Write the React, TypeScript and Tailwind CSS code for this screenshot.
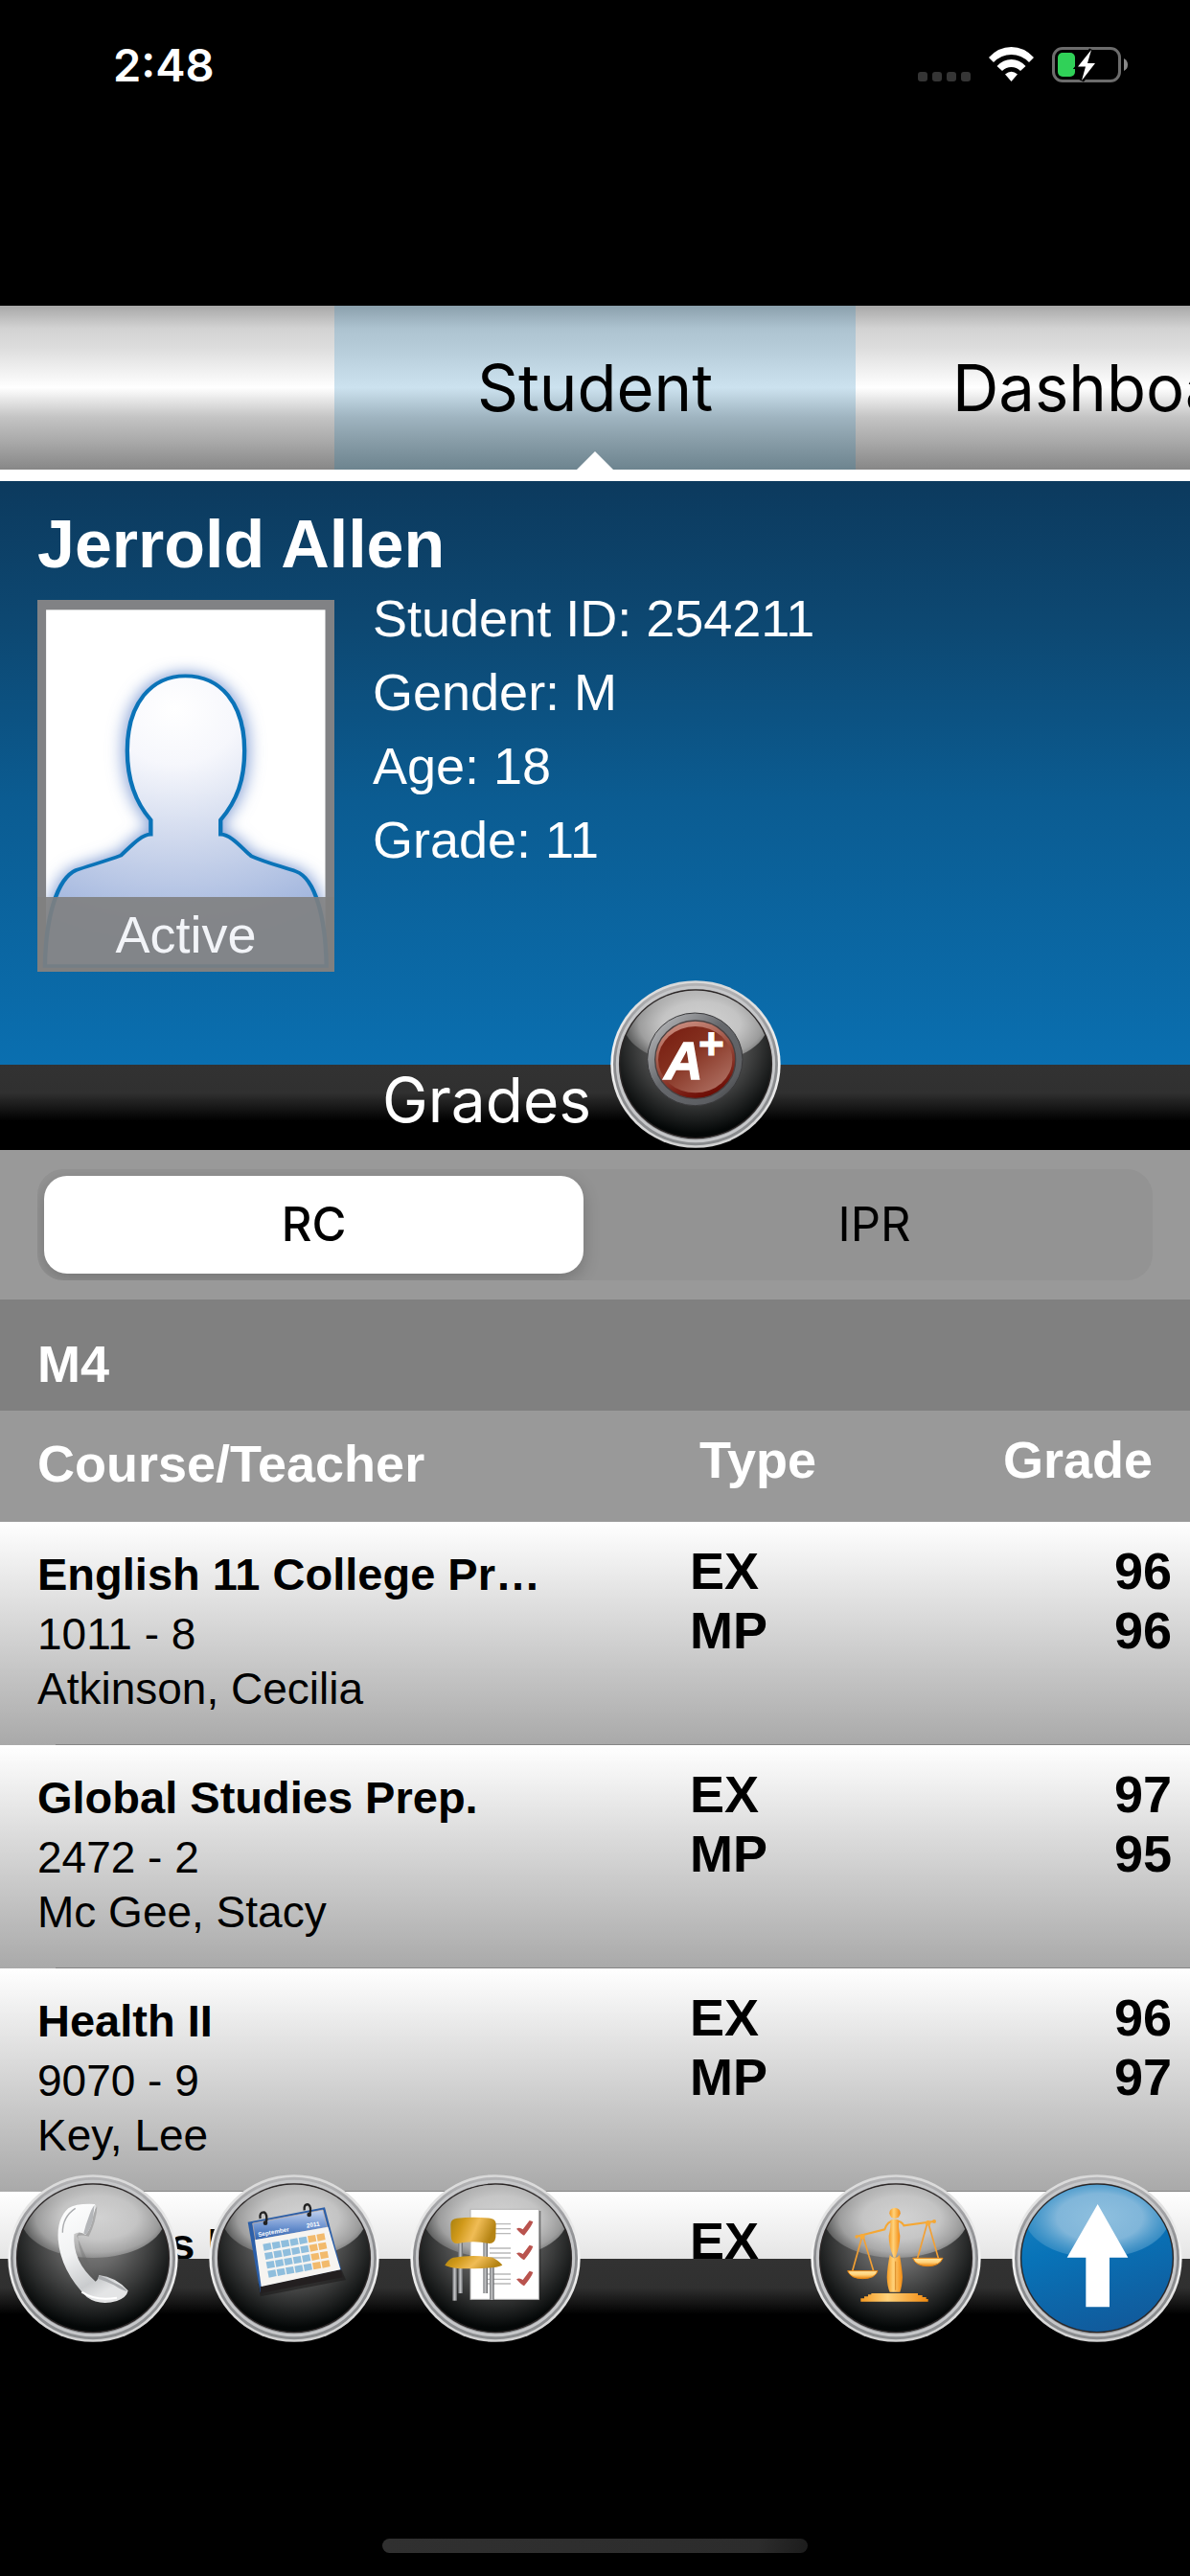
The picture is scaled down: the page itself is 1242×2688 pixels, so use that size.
import type { ReactNode } from "react";

type Course = {
  title: string;
  section: string;
  teacher: string;
  grades: { type: string; grade: string }[];
};

const courses: Course[] = [
  {
    title: "English 11 College Prep",
    section: "1011 - 8",
    teacher: "Atkinson, Cecilia",
    grades: [
      { type: "EX", grade: "96" },
      { type: "MP", grade: "96" },
    ],
  },
  {
    title: "Global Studies Prep.",
    section: "2472 - 2",
    teacher: "Mc Gee, Stacy",
    grades: [
      { type: "EX", grade: "97" },
      { type: "MP", grade: "95" },
    ],
  },
  {
    title: "Health II",
    section: "9070 - 9",
    teacher: "Key, Lee",
    grades: [
      { type: "EX", grade: "96" },
      { type: "MP", grade: "97" },
    ],
  },
  {
    title: "Honors Physics",
    section: "",
    teacher: "",
    grades: [{ type: "EX", grade: "" }],
  },
];

/* Glossy metal-rimmed disc that carries an icon. */
function Orb({ blue = false, children }: { blue?: boolean; children: ReactNode }) {
  const face = blue ? "url(#orb-blue)" : "url(#orb-dark)";
  return (
    <svg viewBox="0 0 534 525" className="block h-[175px] w-[178px]" aria-hidden="true">
      <defs>
        <linearGradient id="orb-rim" x1="0" y1="0" x2="0" y2="1">
          <stop offset="0" stopColor="#b4b4b6" />
          <stop offset="0.45" stopColor="#8b8c8f" />
          <stop offset="1" stopColor="#8a8c8e" />
        </linearGradient>
        <linearGradient id="orb-edge" x1="0" y1="0" x2="0" y2="1">
          <stop offset="0" stopColor="#d8d8d8" />
          <stop offset="0.5" stopColor="#f4f4f4" />
          <stop offset="1" stopColor="#d0d0d0" />
        </linearGradient>
        <radialGradient id="orb-dark" cx="0.5" cy="0.36" r="0.66">
          <stop offset="0" stopColor="#858585" />
          <stop offset="0.3" stopColor="#686868" />
          <stop offset="0.6" stopColor="#3a3b3b" />
          <stop offset="0.92" stopColor="#040707" />
        </radialGradient>
        <linearGradient id="orb-blue" x1="0.3" y1="0" x2="0.6" y2="1">
          <stop offset="0" stopColor="#1b83c2" />
          <stop offset="0.4" stopColor="#0873b8" />
          <stop offset="1" stopColor="#115a9b" />
        </linearGradient>
        <radialGradient id="orb-gloss" cx="0.54" cy="0.5" r="0.54">
          <stop offset="0" stopColor="#d2d2d2" />
          <stop offset="0.5" stopColor="#cacaca" stopOpacity="0.95" />
          <stop offset="0.8" stopColor="#bcbcbc" stopOpacity="0.75" />
          <stop offset="1" stopColor="#a8a8a8" stopOpacity="0.35" />
        </radialGradient>
        <linearGradient id="orb-sky" x1="0" y1="0" x2="0" y2="1">
          <stop offset="0" stopColor="#c4c4c4" stopOpacity="0.9" />
          <stop offset="0.35" stopColor="#c4c4c4" stopOpacity="0" />
        </linearGradient>
        <radialGradient id="orb-gloss-blue" cx="0.52" cy="0.5" r="0.54">
          <stop offset="0" stopColor="#8fc0df" />
          <stop offset="0.55" stopColor="#86b9db" stopOpacity="0.95" />
          <stop offset="1" stopColor="#4b9acb" stopOpacity="0.45" />
        </radialGradient>
        <clipPath id="orb-clip">
          <ellipse cx="267" cy="262" rx="236" ry="230" />
        </clipPath>
      </defs>
      <ellipse cx="267" cy="262.5" rx="266" ry="262" fill="url(#orb-edge)" />
      <ellipse cx="267" cy="262.5" rx="258" ry="254" fill="url(#orb-rim)" />
      <ellipse cx="267" cy="262.5" rx="245" ry="241" fill="none" stroke="#c6c7c9" strokeWidth="9" />
      <ellipse cx="267" cy="262" rx="238" ry="232" fill={face} stroke="#2b2626" strokeWidth="4" />
      <g clipPath="url(#orb-clip)">
        {!blue && <ellipse cx="267" cy="135" rx="226" ry="126" fill="url(#orb-sky)" />}
        <ellipse cx="267" cy="135" rx="226" ry="126" fill={blue ? "url(#orb-gloss-blue)" : "url(#orb-gloss)"} />
      </g>
      {children}
    </svg>
  );
}

function GradeIcon() {
  return (
    <g transform="translate(-771 -70)">
      <defs>
        <linearGradient id="badge-ring" x1="0" y1="0" x2="1" y2="1">
          <stop offset="0" stopColor="#c8c9cb" />
          <stop offset="0.45" stopColor="#66686c" />
          <stop offset="0.8" stopColor="#5c5e62" />
          <stop offset="1" stopColor="#333" />
        </linearGradient>
        <linearGradient id="badge-rim" x1="0.2" y1="0" x2="0.6" y2="1">
          <stop offset="0" stopColor="#cf9284" />
          <stop offset="0.5" stopColor="#9a4d3e" />
          <stop offset="1" stopColor="#6b0a02" />
        </linearGradient>
        <linearGradient id="badge-red" x1="0.1" y1="0.1" x2="0.8" y2="0.9">
          <stop offset="0" stopColor="#7a2013" />
          <stop offset="0.4" stopColor="#84301f" />
          <stop offset="1" stopColor="#a9685a" />
        </linearGradient>
      </defs>
      <ellipse cx="1036" cy="317" rx="149" ry="145" fill="url(#badge-ring)" stroke="#3a3a3c" strokeWidth="3" />
      <ellipse cx="1037" cy="318" rx="126" ry="122" fill="url(#badge-rim)" stroke="#4a4040" strokeWidth="4" />
      <ellipse cx="1037" cy="318" rx="116" ry="104" fill="url(#badge-red)" />
      <text x="940" y="380" fill="#fff" stroke="#fff" strokeWidth="4" fontFamily="Liberation Sans, sans-serif" fontWeight="700" fontStyle="italic" fontSize="168">
        A
      </text>
      <text x="1047" y="317" fill="#fff" stroke="#fff" strokeWidth="3" fontFamily="Liberation Sans, sans-serif" fontWeight="700" fontSize="138">
        +
      </text>
    </g>
  );
}

function PhoneIcon() {
  return (
    <g transform="translate(-24 -58)">
      <defs>
        <linearGradient id="phone" x1="0" y1="0" x2="0.4" y2="1">
          <stop offset="0" stopColor="#ffffff" />
          <stop offset="0.5" stopColor="#f1f2f3" />
          <stop offset="0.85" stopColor="#c9cbcd" />
          <stop offset="1" stopColor="#e4e5e6" />
        </linearGradient>
      </defs>
      <path d="M304 158Q302 204 278 252Q256 246 244 250Q246 320 300 386L240 250Z" fill="#666" opacity="0.35" />
      <path
        d="M214 164Q240 148 297 151Q302 158 292 186Q286 226 268 247Q250 233 232 245Q226 330 299 393Q306 390 310 373Q362 378 401 422Q396 444 366 454Q312 470 272 442Q190 360 182 262Q178 196 214 164Z"
        fill="url(#phone)"
      />
      <path d="M296 154Q288 160 276 196Q268 216 262 242Q268 250 274 240Q290 214 292 186Z" fill="#b4b6b9" />
      <path d="M310 374Q336 384 360 398Q386 408 399 424Q386 424 356 404Q332 392 307 384Z" fill="#aaacaf" />
      <path d="M196 240Q196 190 236 164" fill="none" stroke="#a9abae" strokeWidth="4" />
      <path d="M256 426Q300 456 366 444" fill="none" stroke="#fff" strokeWidth="6" />
    </g>
  );
}

function CalendarIcon() {
  const cells = [0, 1, 2, 3].flatMap((row) =>
    [0, 1, 2, 3, 4, 5, 6].map((col) => ({
      key: `${row}-${col}`,
      x: 820 + col * 28 + row * 5,
      y: 276 - col * 5 + row * 28,
      fill: col > 4 ? "#f2ba6c" : "#8fbedd",
    })),
  );
  return (
    <g transform="translate(-651 -58)">
      <defs>
        <linearGradient id="cal-head" x1="0" y1="0" x2="0" y2="1">
          <stop offset="0" stopColor="#c3d2ee" />
          <stop offset="0.55" stopColor="#6d93d0" />
          <stop offset="1" stopColor="#2f62ad" />
        </linearGradient>
      </defs>
      <path d="M812 440L1080 388L1062 345L805 400Z" fill="#1c1a1b" opacity="0.6" />
      <path d="M773 207L1014 161L1066 358L812 428Z" fill="#2c5fa8" />
      <path d="M812 408L1064 355L1070 380L812 430Z" fill="#231f20" />
      <path d="M788 211L1008 169L1022 224L797 264Z" fill="url(#cal-head)" stroke="#d9b9a0" strokeWidth="2" />
      <path d="M795 263L1024 222L1063 356L815 409Z" fill="#f6f4f1" />
      {cells.map((c) => (
        <path key={c.key} d={`M${c.x} ${c.y}l24 -4l4 20l-24 5z`} fill={c.fill} />
      ))}
      <g fill="#fff" fontFamily="Liberation Sans, sans-serif" fontWeight="700" fontSize="19">
        <text transform="translate(806 253) rotate(-10)">September</text>
        <text transform="translate(958 225) rotate(-10)">2011</text>
      </g>
      <path d="M812 196Q808 176 824 176Q836 182 830 212M950 170Q948 150 962 152Q974 158 966 187" fill="none" stroke="#222" strokeWidth="7" />
      <circle cx="828" cy="210" r="7" fill="#222" />
      <circle cx="965" cy="184" r="7" fill="#222" />
    </g>
  );
}

function ChecklistIcon() {
  return (
    <g transform="translate(-81 -58)">
      <defs>
        <linearGradient id="seat" x1="0" y1="0" x2="1" y2="0.25">
          <stop offset="0" stopColor="#a8800f" />
          <stop offset="0.3" stopColor="#d0991a" />
          <stop offset="0.62" stopColor="#f0bc55" />
          <stop offset="1" stopColor="#b58414" />
        </linearGradient>
        <linearGradient id="leg" x1="0" y1="0" x2="1" y2="0">
          <stop offset="0" stopColor="#77797c" />
          <stop offset="0.5" stopColor="#c4c5c7" />
          <stop offset="1" stopColor="#5c5e61" />
        </linearGradient>
      </defs>
      <rect x="276" y="172" width="214" height="282" fill="#222" opacity="0.5" />
      <rect x="270" y="167" width="214" height="282" fill="#fff" stroke="#b4b4b4" strokeWidth="3" />
      <path d="M340 213h56M340 228h56M340 243h56M330 289h66M330 304h66M330 319h66M322 370h74M322 386h74M322 400h74" stroke="#b9b9b9" strokeWidth="4" />
      {[0, 77, 158].map((dy) => (
        <path
          key={dy}
          transform={`translate(0 ${dy})`}
          d="M414 228Q424 222 434 230L455 202L466 206Q462 220 438 249Q428 244 414 228Z"
          fill="#b9534e"
        />
      ))}
      <g fill="url(#leg)">
        <rect x="232" y="268" width="14" height="162" />
        <rect x="310" y="268" width="14" height="162" />
        <rect x="214" y="345" width="14" height="108" />
        <rect x="330" y="345" width="14" height="106" />
      </g>
      <path d="M208 214Q208 198 228 195Q280 190 332 195Q350 198 350 214L349 255Q346 274 328 274Q280 264 230 274Q210 274 209 252Z" fill="url(#seat)" />
      <path d="M216 318Q280 308 340 318Q362 330 370 342Q350 352 280 353Q210 354 190 342Q202 322 216 318Z" fill="url(#seat)" />
    </g>
  );
}

function ScalesIcon() {
  return (
    <g transform="translate(-78 -58)">
      <defs>
        <linearGradient id="gold" x1="0" y1="0" x2="1" y2="0">
          <stop offset="0" stopColor="#f59a22" />
          <stop offset="0.4" stopColor="#ffd27a" />
          <stop offset="1" stopColor="#f28a10" />
        </linearGradient>
        <linearGradient id="pan" x1="0" y1="0" x2="0" y2="1">
          <stop offset="0" stopColor="#ffe9a8" />
          <stop offset="0.5" stopColor="#ffd27a" />
          <stop offset="1" stopColor="#e98712" />
        </linearGradient>
      </defs>
      <path d="M222 252L310 230Q318 204 341 202Q364 204 370 218L464 205" fill="none" stroke="#f5a733" strokeWidth="6" />
      <circle cx="222" cy="253" r="5" fill="#f5a733" />
      <circle cx="465" cy="205" r="6" fill="#f5a733" />
      <path d="M240 250L209 360M242 250L275 360M444 208L413 320M446 208L478 320" stroke="#f2a034" strokeWidth="5" />
      <circle cx="240" cy="252" r="8" fill="#f7ab39" />
      <circle cx="446" cy="210" r="8" fill="#f7ab39" />
      <path d="M194 360H288Q280 384 241 384Q204 384 194 360Z" fill="url(#pan)" stroke="#e98712" strokeWidth="3" />
      <path d="M398 320H492Q482 345 445 345Q408 345 398 320Z" fill="url(#pan)" stroke="#e98712" strokeWidth="3" />
      <circle cx="342" cy="179" r="17" fill="url(#gold)" />
      <path d="M328 202Q341 194 355 202Q352 220 358 250Q358 280 344 318H338Q322 280 323 250Q330 220 328 202Z" fill="url(#gold)" />
      <path d="M326 310Q341 330 357 310Q364 350 366 380Q364 410 358 426H326Q318 410 317 380Q318 350 326 310Z" fill="url(#gold)" />
      <path d="M344 330V420" stroke="#c77411" strokeWidth="2" />
      <path d="M268 430H414V436H428V442H440V448H446V456H235V446H246V440H258V434H268Z" fill="url(#gold)" />
    </g>
  );
}

function ArrowIcon() {
  return (
    <g transform="translate(-709 -58)">
      <path d="M978 151L1073 318H1015V473H941V318H882Z" fill="#fff" />
    </g>
  );
}

function OrbButton({ label, blue, children }: { label: string; blue?: boolean; children: ReactNode }) {
  return (
    <button type="button" aria-label={label} className="block shrink-0 rounded-full">
      <Orb blue={blue}>{children}</Orb>
    </button>
  );
}

function StatusBar() {
  return (
    <header className="flex h-[319px] shrink-0 items-start justify-between pr-[62px] pl-[118px] text-white">
      <time className="pt-[38px] font-[Inter] text-[47px] leading-[60px] font-semibold">2:48</time>
      <div className="flex pt-[49px]">
        <svg viewBox="0 0 222 38" className="h-[38px] w-[222px]" role="img" aria-label="Wi-Fi connected, battery charging">
          <g fill="#353535">
            <rect x="0" y="26" width="10" height="10" rx="3" />
            <rect x="15" y="26" width="10" height="10" rx="3" />
            <rect x="30" y="26" width="10" height="10" rx="3" />
            <rect x="45" y="26" width="10" height="10" rx="3" />
          </g>
          <g fill="#fff">
            <path d="M74 11Q84 0 97.500 0Q111 0 121 11L116 16Q108 8 97.500 8Q87 8 79 16Z" />
            <path d="M82.500 20Q89 13 97.500 13Q106 13 112.500 20L107 25Q103 21 97.500 21Q92 21 88 25Z" />
            <path d="M91 28.500Q97.500 23 104 28.500L97.500 36Z" />
          </g>
          <rect x="141.500" y="1.500" width="69" height="34" rx="9.500" fill="none" stroke="#6c6c6c" strokeWidth="3" />
          <path d="M215 12Q219 14 219 18.500Q219 23 215 25Z" fill="#8a8a8a" />
          <rect x="146" y="6" width="18" height="25" rx="5" fill="#30d158" />
          <path
            d="M181 3L167 20.500H175L171 35L185 17H177Z"
            fill="#fff"
            stroke="#000"
            strokeWidth="5"
            paintOrder="stroke"
          />
        </svg>
      </div>
    </header>
  );
}

function Tabs() {
  return (
    <nav
      aria-label="Sections"
      className="grid h-[183px] shrink-0 grid-cols-[1fr_544px_1fr] overflow-hidden border-b-[12px] border-white bg-[linear-gradient(#a8a8a8,#d3d3d3_14%,#dcdcdc_25%,#ffffff_50%,#c4c4c4_68%,#a9a9a9_83%,#878787)] font-[Inter] text-[67px] leading-[84px]"
    >
      <span />
      <button
        type="button"
        aria-current="page"
        className="relative bg-[linear-gradient(#8ba0ac,#adc3d0_14%,#b5cbd8_25%,#cce2ef_50%,#9fb4c0_68%,#879ca7_83%,#6d848f)]"
      >
        Student
        <svg viewBox="0 0 38 19" className="absolute bottom-0 left-1/2 h-[19px] w-[38px] -translate-x-1/2" aria-hidden="true">
          <path d="M19 0L38 19H0Z" fill="#fff" />
        </svg>
      </button>
      <button type="button" className="min-w-0 pl-[101px] text-left whitespace-nowrap">
        Dashboard
      </button>
    </nav>
  );
}

function Avatar() {
  return (
    <figure className="relative h-[388px] w-[310px] shrink-0 bg-[#818285]">
      <svg viewBox="98 78 783 1164" preserveAspectRatio="none" className="block h-full w-full" role="img" aria-label="Student photo placeholder">
        <defs>
          <radialGradient id="person" gradientUnits="userSpaceOnUse" cx="460" cy="420" r="860">
            <stop offset="0" stopColor="#ffffff" />
            <stop offset="0.2" stopColor="#f6f7fc" />
            <stop offset="0.5" stopColor="#ccd6ec" />
            <stop offset="0.85" stopColor="#9db2dc" />
          </radialGradient>
          <filter id="glow" x="-20%" y="-20%" width="140%" height="140%">
            <feGaussianBlur stdDeviation="22" />
          </filter>
          <clipPath id="photo">
            <rect x="121" y="109" width="736" height="1110" />
          </clipPath>
        </defs>
        <rect x="121" y="109" width="736" height="1110" fill="#fff" />
        <g clipPath="url(#photo)">
          <path
            d="M397 767C355 710 335 640 335 550C335 400 400 316 488 316C580 316 644 400 644 550C644 640 625 705 581 767V812C610 812 640 860 662 880C700 900 740 912 780 928C830 950 858 1070 860 1224H118C120 1070 150 950 200 924C240 908 280 895 318 878C340 855 370 812 397 812Z"
            fill="#7f9bd3"
            stroke="#7f9bd3"
            strokeWidth="20"
            filter="url(#glow)"
          />
        </g>
        <path
          d="M397 767C355 710 335 640 335 550C335 400 400 316 488 316C580 316 644 400 644 550C644 640 625 705 581 767V812C610 812 640 860 662 880C700 900 740 912 780 928C830 950 858 1070 860 1224H118C120 1070 150 950 200 924C240 908 280 895 318 878C340 855 370 812 397 812Z"
          fill="url(#person)"
          stroke="#0a73b8"
          strokeWidth="11"
        />
      </svg>
      <figcaption className="absolute inset-x-0 bottom-0 bg-[#808080]/90 text-center text-[54px] leading-[78px] text-[#f2f4f8]">
        Active
      </figcaption>
    </figure>
  );
}

function StudentCard() {
  return (
    <section className="shrink-0 bg-[linear-gradient(#0c3a5e,#0d4872_25%,#0b5c92_55%,#0a6fb0)] px-[39px] pt-[27px] pb-[97px] text-white">
      <h1 className="text-[70px] leading-[78px] font-bold">Jerrold Allen</h1>
      <div className="flex items-end gap-[40px]">
        <Avatar />
        <ul className="self-start pb-[99px] text-[54px] leading-[77px]">
          <li>Student ID: 254211</li>
          <li>Gender: M</li>
          <li>Age: 18</li>
          <li>Grade: 11</li>
        </ul>
      </div>
    </section>
  );
}

function GradesBar() {
  return (
    <div className="flex h-[89px] shrink-0 items-end justify-center gap-[20px] bg-[linear-gradient(#323232,#303030_33%,#000_66%)] pr-[28px] text-white">
      <h2 className="pb-[12px] font-[Inter] text-[64px] leading-[80px]">Grades</h2>
      <div className="relative mb-[2px]">
        <OrbButton label="Grades menu">
          <GradeIcon />
        </OrbButton>
      </div>
    </div>
  );
}

function ReportSwitch() {
  return (
    <div className="shrink-0 bg-[#999999] px-[39px] py-5">
      <div
        role="group"
        aria-label="Report type"
        className="grid h-[116px] grid-cols-[563px_1fr] overflow-hidden rounded-[27px] bg-[#939393] p-[7px] font-[Inter] text-[49px] leading-[60px] text-black"
      >
        <button
          type="button"
          aria-pressed="true"
          className="rounded-[24px] bg-white font-medium shadow-[0_6px_18px_rgba(0,0,0,0.2)]"
        >
          RC
        </button>
        <button type="button" aria-pressed="false" className="pl-[20px]">
          IPR
        </button>
      </div>
    </div>
  );
}

function GradeTable() {
  return (
    <main className="min-h-0 flex-1 overflow-hidden bg-[#999999]">
      <table className="w-full table-fixed border-collapse text-left">
        <caption className="bg-[#808080] px-[39px] pt-[36px] pb-[18px] text-left text-[54px] leading-[62px] font-bold text-white">
          M4
        </caption>
        <colgroup>
          <col className="w-[720px]" />
          <col className="w-[240px]" />
          <col />
        </colgroup>
        <thead>
          <tr className="h-[116px] align-top text-[54px] leading-[62px] text-white">
            <th scope="col" className="pt-[24px] pl-[39px] font-bold">
              Course/Teacher
            </th>
            <th scope="col" className="pt-[20px] pl-[10px] font-bold">
              Type
            </th>
            <th scope="col" className="pt-[20px] pr-[39px] text-right font-bold">
              Grade
            </th>
          </tr>
        </thead>
        <tbody>
          {courses.map((course) => (
            <tr
              key={course.title}
              className="h-[233px] align-top text-black [background:linear-gradient(#858585,#858585)_58px_100%/100%_1px_no-repeat,linear-gradient(#ffffff,#dcdcdc_40%,#a9a9a9)]"
            >
              <td className="pt-[24px] pl-[39px] text-[46px]">
                <div className="w-[525px] truncate text-[47px] leading-[62px] font-bold">{course.title}</div>
                <div className="leading-[62px]">{course.section}</div>
                <div className="leading-[52px]">{course.teacher}</div>
              </td>
              <td className="pt-[20px] text-[54px] leading-[62px] font-bold">
                {course.grades.map((g) => (
                  <div key={g.type}>{g.type}</div>
                ))}
              </td>
              <td className="pt-[20px] pr-[19px] text-right text-[54px] leading-[62px] font-bold">
                {course.grades.map((g) => (
                  <div key={g.type}>{g.grade}</div>
                ))}
              </td>
            </tr>
          ))}
        </tbody>
      </table>
    </main>
  );
}

function Toolbar() {
  return (
    <footer className="flex h-[331px] shrink-0 flex-col justify-between bg-[linear-gradient(#323232,#303030_30px,#000_58px)] pb-[24px]">
      <div className="relative -mt-[88px] flex items-center justify-between px-2">
        <div className="flex gap-[32px]">
          <OrbButton label="Contacts">
            <PhoneIcon />
          </OrbButton>
          <OrbButton label="Calendar">
            <CalendarIcon />
          </OrbButton>
          <OrbButton label="Attendance">
            <ChecklistIcon />
          </OrbButton>
        </div>
        <div className="flex gap-[32px]">
          <OrbButton label="Discipline">
            <ScalesIcon />
          </OrbButton>
          <OrbButton label="More" blue>
            <ArrowIcon />
          </OrbButton>
        </div>
      </div>
      <div className="mx-auto h-[15px] w-[444px] rounded-full bg-[linear-gradient(100deg,#303030,#2c2c2c_88%,#1c1c1c)]" />
    </footer>
  );
}

export default function App() {
  return (
    <div className="flex h-screen flex-col overflow-hidden bg-black font-['Liberation_Sans',Arial,sans-serif]">
      <StatusBar />
      <Tabs />
      <StudentCard />
      <GradesBar />
      <ReportSwitch />
      <GradeTable />
      <Toolbar />
    </div>
  );
}
